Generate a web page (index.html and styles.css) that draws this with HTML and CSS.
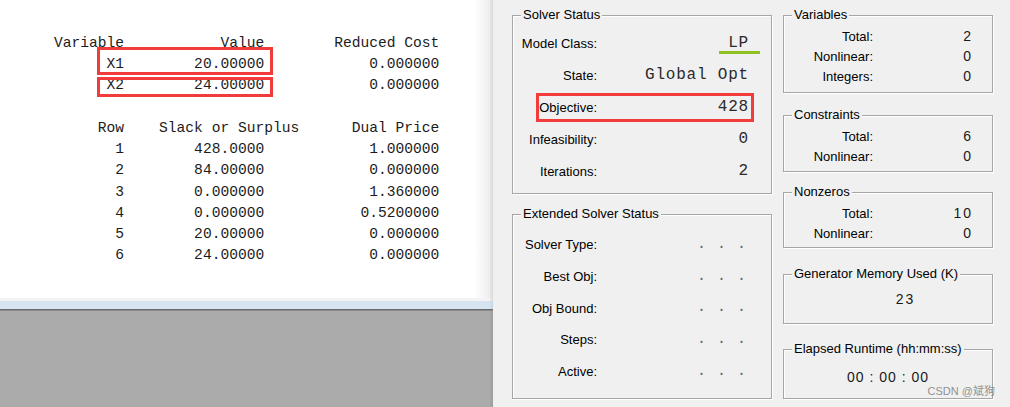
FILE: index.html
```html
<!DOCTYPE html>
<html lang="en">
<head>
<meta charset="utf-8">
<title>LINGO Solution Report</title>
<link rel="stylesheet" href="styles.css">
</head>
<body>
<div class="app">
  <div class="output">
    <div class="sheet">
      <div class="report">
        <div class="line">Variable           Value        Reduced Cost</div>
        <div class="line mark mark-a">      X1        20.00000            0.000000</div>
        <div class="line mark mark-b">      X2        24.00000            0.000000</div>
        <div class="line"> </div>
        <div class="line">     Row    Slack or Surplus      Dual Price</div>
        <div class="line">       1        428.0000            1.000000</div>
        <div class="line">       2        84.00000            0.000000</div>
        <div class="line">       3        0.000000            1.360000</div>
        <div class="line">       4        0.000000           0.5200000</div>
        <div class="line">       5        20.00000            0.000000</div>
        <div class="line">       6        24.00000            0.000000</div>
      </div>
    </div>
    <div class="sheet-foot"></div>
    <div class="band"></div>
    <div class="workspace"></div>
  </div>

  <div class="status">
    <div class="col col-main">
      <section class="group group-solver">
        <div class="group-title">Solver Status</div>
        <div class="rows rows-main">
          <div class="row"><span class="label">Model Class:</span><span class="val"><span class="lp">LP</span></span></div>
          <div class="row"><span class="label">State:</span><span class="val">Global Opt</span></div>
          <div class="row row-flag"><span class="label">Objective:</span><span class="val">428</span></div>
          <div class="row"><span class="label">Infeasibility:</span><span class="val">0</span></div>
          <div class="row"><span class="label">Iterations:</span><span class="val">2</span></div>
        </div>
      </section>

      <section class="group group-ext">
        <div class="group-title">Extended Solver Status</div>
        <div class="rows rows-ext">
          <div class="row"><span class="label">Solver Type:</span><span class="val dots">. . .</span></div>
          <div class="row"><span class="label">Best Obj:</span><span class="val dots">. . .</span></div>
          <div class="row"><span class="label">Obj Bound:</span><span class="val dots">. . .</span></div>
          <div class="row"><span class="label">Steps:</span><span class="val dots">. . .</span></div>
          <div class="row"><span class="label">Active:</span><span class="val dots">. . .</span></div>
        </div>
      </section>
    </div>

    <div class="col col-side">
      <section class="group box-vars">
        <div class="group-title">Variables</div>
        <div class="rows rows-side">
          <div class="srow"><span class="label">Total:</span><span class="num">2</span></div>
          <div class="srow"><span class="label">Nonlinear:</span><span class="num">0</span></div>
          <div class="srow"><span class="label">Integers:</span><span class="num">0</span></div>
        </div>
      </section>

      <section class="group box-cons">
        <div class="group-title">Constraints</div>
        <div class="rows rows-side">
          <div class="srow"><span class="label">Total:</span><span class="num">6</span></div>
          <div class="srow"><span class="label">Nonlinear:</span><span class="num">0</span></div>
        </div>
      </section>

      <section class="group box-nz">
        <div class="group-title">Nonzeros</div>
        <div class="rows rows-side">
          <div class="srow"><span class="label">Total:</span><span class="num">10</span></div>
          <div class="srow"><span class="label">Nonlinear:</span><span class="num">0</span></div>
        </div>
      </section>

      <section class="group box-mem">
        <div class="group-title">Generator Memory Used (K)</div>
        <div class="single single-mem">23</div>
      </section>

      <section class="group box-time">
        <div class="group-title">Elapsed Runtime (hh:mm:ss)</div>
        <div class="single single-time">00 : 00 : 00</div>
      </section>
    </div>
  </div>
</div>
<div class="watermark">CSDN @斌狗</div>
</body>
</html>
```

FILE: styles.css
```css
* {
  box-sizing: border-box;
  margin: 0;
  padding: 0;
}

html, body {
  width: 1010px;
  height: 407px;
  overflow: hidden;
}

body {
  position: relative;
  background: #f0f0f0;
  color: #000;
  font-family: "Liberation Sans", Arial, sans-serif;
  font-size: 13px;
}

.app {
  display: flex;
  height: 407px;
}

/* ---------- left: report window ---------- */
.output {
  flex: none;
  width: 493px;
  display: flex;
  flex-direction: column;
}

.sheet {
  height: 298px;
  padding: 32.5px 0 0 54px;
  background: linear-gradient(to right, #fff 0, #fff 474px, #efefef 489px, #e2e2e2 491px, #d9d9d9 493px);
}

.report {
  font-family: "Liberation Mono", "DejaVu Sans Mono", monospace;
  font-size: 14.6px;
  line-height: 21.3px;
  color: #1c1c1c;
}

.line {
  position: relative;
  height: 21.3px;
  white-space: pre;
}

.mark::before {
  content: "";
  position: absolute;
  left: 43px;
  width: 170px;
  border: 3px solid #f23b3b;
}

.mark-a::before {
  top: -6.8px;
  bottom: 0;
}

.mark-b::before {
  top: 1.9px;
  bottom: -0.6px;
}

.sheet-foot {
  height: 3px;
  background: linear-gradient(to right, #f3f3f3 0, #f3f3f3 489px, #dcdcdc 493px);
}

.band {
  height: 8px;
  background: linear-gradient(to right, #d6e4f2 0, #d6e4f2 489px, #c9d5e2 493px);
}

.workspace {
  flex: 1;
  border-top: 1px solid #6b6b6b;
  box-shadow: inset 0 1px 0 #8c8c8c;
  background: linear-gradient(to right, #ababab 0, #ababab 489px, #9c9c9c 493px);
}

/* ---------- right: solver status ---------- */
.status {
  flex: 1;
  display: flex;
  padding: 15px 0 0 19px;
}

.col {
  display: flex;
  flex-direction: column;
}

.col-main {
  width: 260px;
  gap: 20px;
}

.col-side {
  width: 210px;
  margin-left: 11px;
}

.group {
  position: relative;
  border: 1px solid #a6a6a6;
  box-shadow: inset 1px 1px 0 #fff, 1px 1px 0 #fff;
}

.group-title {
  width: max-content;
  height: 16px;
  margin: -9px 0 0 8px;
  padding: 0 2px;
  line-height: 16px;
  background: #f0f0f0;
  white-space: nowrap;
}

.group-solver {
  height: 179px;
  padding-right: 23px;
}

.group-ext {
  height: 185px;
  padding-right: 23px;
}

.rows-main {
  padding-top: 4px;
}

.rows-ext {
  padding-top: 7px;
}

.row {
  position: relative;
  display: grid;
  grid-template-columns: 84px 1fr;
  align-items: center;
  height: 32px;
}

.rows-ext .row {
  height: 31.7px;
}

.label {
  text-align: right;
  white-space: nowrap;
}

.val {
  text-align: right;
  font-family: "Liberation Mono", "Courier New", monospace;
  font-size: 16px;
  line-height: 18px;
  letter-spacing: 0.8px;
  color: #2a2a2a;
  margin-right: -1px;
}

.lp {
  position: relative;
  display: inline-block;
}

.lp::after {
  content: "";
  position: absolute;
  left: -9px;
  right: -11px;
  bottom: -2px;
  height: 3px;
  background: #8dc21f;
}

.row-flag::after {
  content: "";
  position: absolute;
  left: 23px;
  right: -6px;
  top: 2px;
  bottom: 1px;
  border: 3px solid #f23b3b;
}

.dots {
  color: #666;
  font-size: 15px;
  letter-spacing: 1px;
  margin-right: 1px;
}

/* side boxes */
.box-vars {
  height: 78px;
}

.box-cons {
  height: 57px;
  margin-top: 22px;
}

.box-nz {
  height: 56px;
  margin-top: 20px;
}

.box-mem {
  height: 50px;
  margin-top: 26px;
}

.box-time {
  height: 50px;
  margin-top: 25px;
}

.rows-side {
  padding: 3px 19px 0 0;
}

.srow {
  display: grid;
  grid-template-columns: 89px 1fr;
  align-items: center;
  height: 20px;
}

.num {
  text-align: right;
  font-size: 14px;
  letter-spacing: 2px;
  color: #1a1a1a;
}

.single {
  text-align: center;
  font-size: 14px;
  color: #1a1a1a;
}

.single-mem {
  line-height: 34px;
  padding-left: 35px;
  letter-spacing: 2px;
}

.single-time {
  line-height: 40px;
  letter-spacing: 1px;
}

.watermark {
  position: absolute;
  right: 15px;
  top: 385px;
  font-family: "Liberation Sans", "Noto Sans CJK SC", sans-serif;
  font-size: 11px;
  line-height: 13px;
  color: rgba(110, 110, 110, 0.75);
  white-space: nowrap;
}
```
